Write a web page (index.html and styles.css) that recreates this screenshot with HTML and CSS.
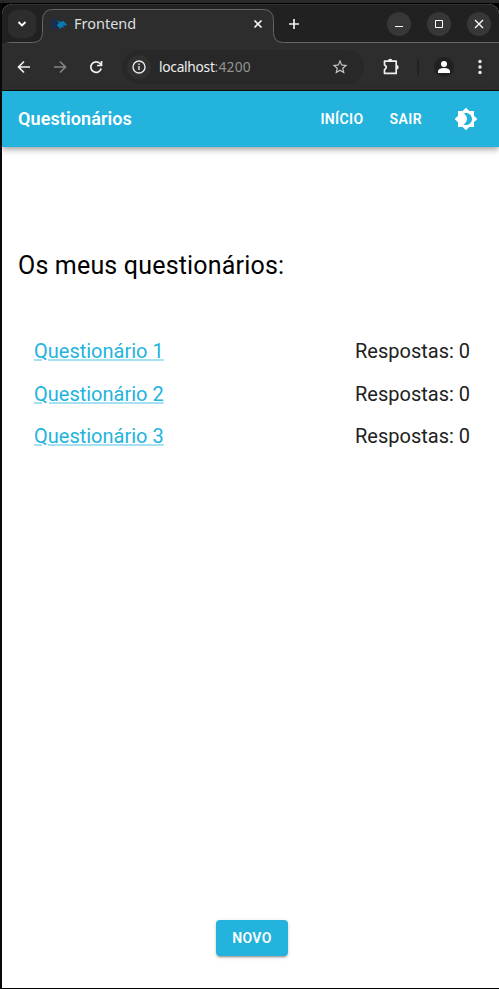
FILE: index.html
```html
<!DOCTYPE html>
<html lang="pt">
<head>
<meta charset="utf-8">
<title>Frontend</title>
<link rel="stylesheet" href="styles.css">
</head>
<body>
<div class="window">
  <div class="tabstrip">
    <button class="tab-search" aria-label="Tabs"><svg width="10" height="8" viewBox="0 0 10 8"><path d="M1.500 2 5 5.500 8.500 2" fill="none" stroke="#fff" stroke-width="1.800"/></svg></button>
    <svg class="tab-shape" width="497" height="39" viewBox="0 0 497 39"><path d="M0 48V46.500Q0 38.500 9 38.500H30.500Q40.500 38.500 40.500 28.500V16.500Q40.500 5.500 50.500 5.500H261.500Q271.500 5.500 271.500 16.500V28.500Q271.500 38.500 281.500 38.500H497V48Z" fill="#2d2d2d" stroke="#656565"/></svg>
    <div class="tab">
      <svg class="favicon" width="16" height="16" viewBox="0 0 16 16"><path d="M0 3h3l3 5V3h2v10H6L2.500 8v5H0z" fill="#143055"/><path d="m6 4 3 2 4-1 1 2 2 1-1 2-2-1-1 1 2 2-3-1-2 2-3-4 2-2z" fill="#087ab4"/></svg>
      <span class="tab-title">Frontend</span>
      <svg class="tab-close" width="10" height="10" viewBox="0 0 10 10"><path d="m1.500 1.500 7 7m0-7-7 7" stroke="#f4f4f4" stroke-width="1.700"/></svg>
    </div>
    <svg class="new-tab" width="12" height="12" viewBox="0 0 12 12"><path d="M6 1v10M1 6h10" stroke="#f0f0f0" stroke-width="1.700"/></svg>
    <div class="controls">
      <span class="control"><svg width="12" height="12" viewBox="0 0 12 12"><path d="M2 8.500h8" stroke="#fff"/></svg></span>
      <span class="control"><svg width="12" height="12" viewBox="0 0 12 12"><path d="M2.500 2.500h7v7h-7z" fill="none" stroke="#fff"/></svg></span>
      <span class="control"><svg width="12" height="12" viewBox="0 0 12 12"><path d="m2 2 8 8m0-8-8 8" stroke="#fff" stroke-width="1.300"/></svg></span>
    </div>
  </div>
  <div class="toolbar">
    <svg class="back" width="16" height="16" viewBox="0 0 16 16"><path d="M14 8H3m5-5.500L2.500 8 8 13.500" fill="none" stroke="#f0f0f0" stroke-width="1.700"/></svg>
    <svg class="forward" width="16" height="16" viewBox="0 0 16 16"><path d="M2 8h11M8 2.500 13.500 8 8 13.500" fill="none" stroke="#858585" stroke-width="1.600"/></svg>
    <svg class="reload" width="16" height="16" viewBox="0 0 16 16"><path d="M13.200 9.500A5.300 5.300 0 1 1 12 4.500L13.500 6M13.500 2v4.500H9" fill="none" stroke="#f0f0f0" stroke-width="1.700"/></svg>
    <div class="address">
      <span class="site-info"><svg width="16" height="16" viewBox="0 0 16 16"><circle cx="8" cy="8" r="6" fill="none" stroke="#e8e8e8" stroke-width="1.400"/><path d="M8 7v4M8 4.500v1.500" stroke="#e8e8e8" stroke-width="1.400"/></svg></span>
      <span class="url">localhost<span class="port">:4200</span></span>
      <svg class="star" width="18" height="18" viewBox="0 0 24 24"><path d="m22 9.240-7.190-.62L12 2 9.190 8.630 2 9.240l5.460 4.730L5.820 21 12 17.270 18.180 21l-1.630-7.030L22 9.240zM12 15.400l-3.760 2.270 1-4.280-3.320-2.880 4.380-.38L12 6.100l1.710 4.040 4.380.38-3.320 2.880 1 4.280L12 15.400z" fill="#c4c4c4"/></svg>
    </div>
    <svg class="extension" width="18" height="18" viewBox="0 0 18 18"><path d="M2.500 3.200H14.200v12.200H2.500v-3.700q3.500-2.500 0-4.900z" fill="none" stroke="#f0f0f0" stroke-width="1.700" stroke-linejoin="round"/><path d="M6 3a2.200 2.200 0 0 1 4.400 0zM14.500 7a2.200 2.200 0 0 1 0 4.400z" fill="#f0f0f0"/></svg>
    <span class="divider"></span>
    <span class="profile"><svg width="20" height="20" viewBox="0 0 20 20"><circle cx="10" cy="7" r="3" fill="#fff"/><path d="M4 16v-1.500q0-3.500 6-3.500t6 3.500V16z" fill="#fff"/></svg></span>
    <svg class="menu" width="4" height="16" viewBox="0 0 4 16"><g fill="#f0f0f0"><circle cx="2" cy="2.500" r="1.700"/><circle cx="2" cy="8" r="1.700"/><circle cx="2" cy="13.500" r="1.700"/></g></svg>
  </div>
  <header class="appbar">
    <span class="brand">Questionários</span>
    <a class="nav-link">INÍCIO</a>
    <a class="nav-link">SAIR</a>
    <svg class="theme" width="24" height="24" viewBox="0 0 24 24"><path d="M20 8.690V4h-4.690L12 .69 8.690 4H4v4.690L.69 12 4 15.310V20h4.690L12 23.310 15.310 20H20v-4.690L23.310 12 20 8.690zM12 18c-.89 0-1.740-.2-2.500-.55C11.560 16.500 13 14.420 13 12s-1.440-4.500-3.500-5.450C10.260 6.200 11.110 6 12 6c3.310 0 6 2.690 6 6s-2.690 6-6 6z" fill="#fff"/></svg>
  </header>
  <main class="content">
    <h1>Os meus questionários:</h1>
    <ul class="list">
      <li><a class="survey">Questionário 1</a><span>Respostas: 0</span></li>
      <li><a class="survey">Questionário 2</a><span>Respostas: 0</span></li>
      <li><a class="survey">Questionário 3</a><span>Respostas: 0</span></li>
    </ul>
    <button class="create">NOVO</button>
  </main>
</div>
</body>
</html>
```
FILE: styles.css
```css
* { box-sizing: border-box; }
body {
  margin: 0;
  height: 989px;
  padding: 3px 0 1px 2px;
  overflow: hidden;
  background: linear-gradient(#292929 0 3px, transparent 3px), linear-gradient(90deg, #080808 2px, #000 2px);
  font-family: Roboto, "Liberation Sans", sans-serif;
}
svg { display: block; flex: none; }
button { border: 0; padding: 0; }
.window { height: 985px; display: flex; flex-direction: column; border-radius: 11px 11px 0 0; border-top: 1px solid #000; overflow: hidden; background: #fff; }
.tabstrip { position: relative; height: 39px; display: flex; align-items: center; background: #212121; box-shadow: inset 0 1px #303030; flex: none; }
.tab-shape { position: absolute; left: 0; top: 0; }
.tab-search { position: relative; z-index: 1; width: 28px; height: 28px; margin-left: 6px; margin-top: 1px; border-radius: 9px; background: #2d2d2d; display: grid; place-items: center; }
.tab { position: relative; width: 231px; margin-left: 7px; padding: 0 11px 0 8px; display: flex; align-items: center; }
.tab-close { margin-top: 1px; }
.tab-title { margin: 0 0 2px 7px; flex: 1; font: 14.500px/20px "Noto Sans", sans-serif; color: #dedede; }
.new-tab { position: relative; margin: 1px 0 0 14px; }
.controls { position: relative; margin: 1px 8px 0 auto; display: flex; gap: 16px; }
.control { width: 24px; height: 24px; border-radius: 50%; background: #373737; display: grid; place-items: center; }
.toolbar { height: 48px; flex: none; display: flex; align-items: center; padding: 0 17px 0 14px; background: #2d2d2d; border-bottom: 1px solid #111; }
.forward { margin-left: 20px; }
.reload { margin-left: 20px; }
.address { width: 242px; height: 34px; margin-left: 18px; border-radius: 17px; background: #282828; display: flex; align-items: center; padding: 0 15px 0 5px; }
.site-info { width: 24px; height: 24px; border-radius: 50%; background: #303030; display: grid; place-items: center; }
.url { margin-left: 8px; flex: 1; font: 13.800px/20px "Noto Sans", sans-serif; letter-spacing: -.3px; color: #eee; }
.port { color: #929292; letter-spacing: .2px; }
.extension { margin-left: 18px; }
.divider { width: 2px; height: 16px; margin-left: 17px; background: #222; }
.profile { width: 20px; height: 20px; margin-left: 15px; border-radius: 50%; background: #202222; }
.menu { margin-left: auto; }
.appbar { position: relative; height: 56px; flex: none; display: flex; align-items: center; padding: 0 21px 0 16px; background: #23b3dd; color: #fff; box-shadow: 0 2px 4px -1px rgba(0,0,0,.2), 0 4px 5px rgba(0,0,0,.14), 0 1px 10px rgba(0,0,0,.12); }
.brand { flex: 1; margin-bottom: 2px; font-size: 18px; font-weight: 600; letter-spacing: .1px; }
.nav-link { font-size: 14px; font-weight: 600; letter-spacing: .4px; margin-right: 26px; }
.nav-link + .theme { margin-left: 6px; }
.content { flex: 1; padding: 101px 16px 32px; display: flex; flex-direction: column; color: #000; }
h1 { margin: 0; font-size: 25px; line-height: 36px; font-weight: 400; letter-spacing: .184px; }
.list { list-style: none; margin: 52px 0 0; padding: 0 13px 0 16px; font-size: 20px; line-height: 30px; color: #212121; }
.list li { display: flex; justify-content: space-between; height: 42.500px; }
.survey { color: #23b3dd; text-decoration: underline 2px; text-decoration-color: rgba(35,179,221,.4); }
.create { width: 72px; height: 36px; margin: auto auto 0 198px; border-radius: 4px; background: #23b3dd; color: #fff; font: 600 14px/24px Roboto, sans-serif; letter-spacing: .35px; box-shadow: 0 3px 1px -2px rgba(0,0,0,.2), 0 2px 2px rgba(0,0,0,.14), 0 1px 5px rgba(0,0,0,.12); }
```
